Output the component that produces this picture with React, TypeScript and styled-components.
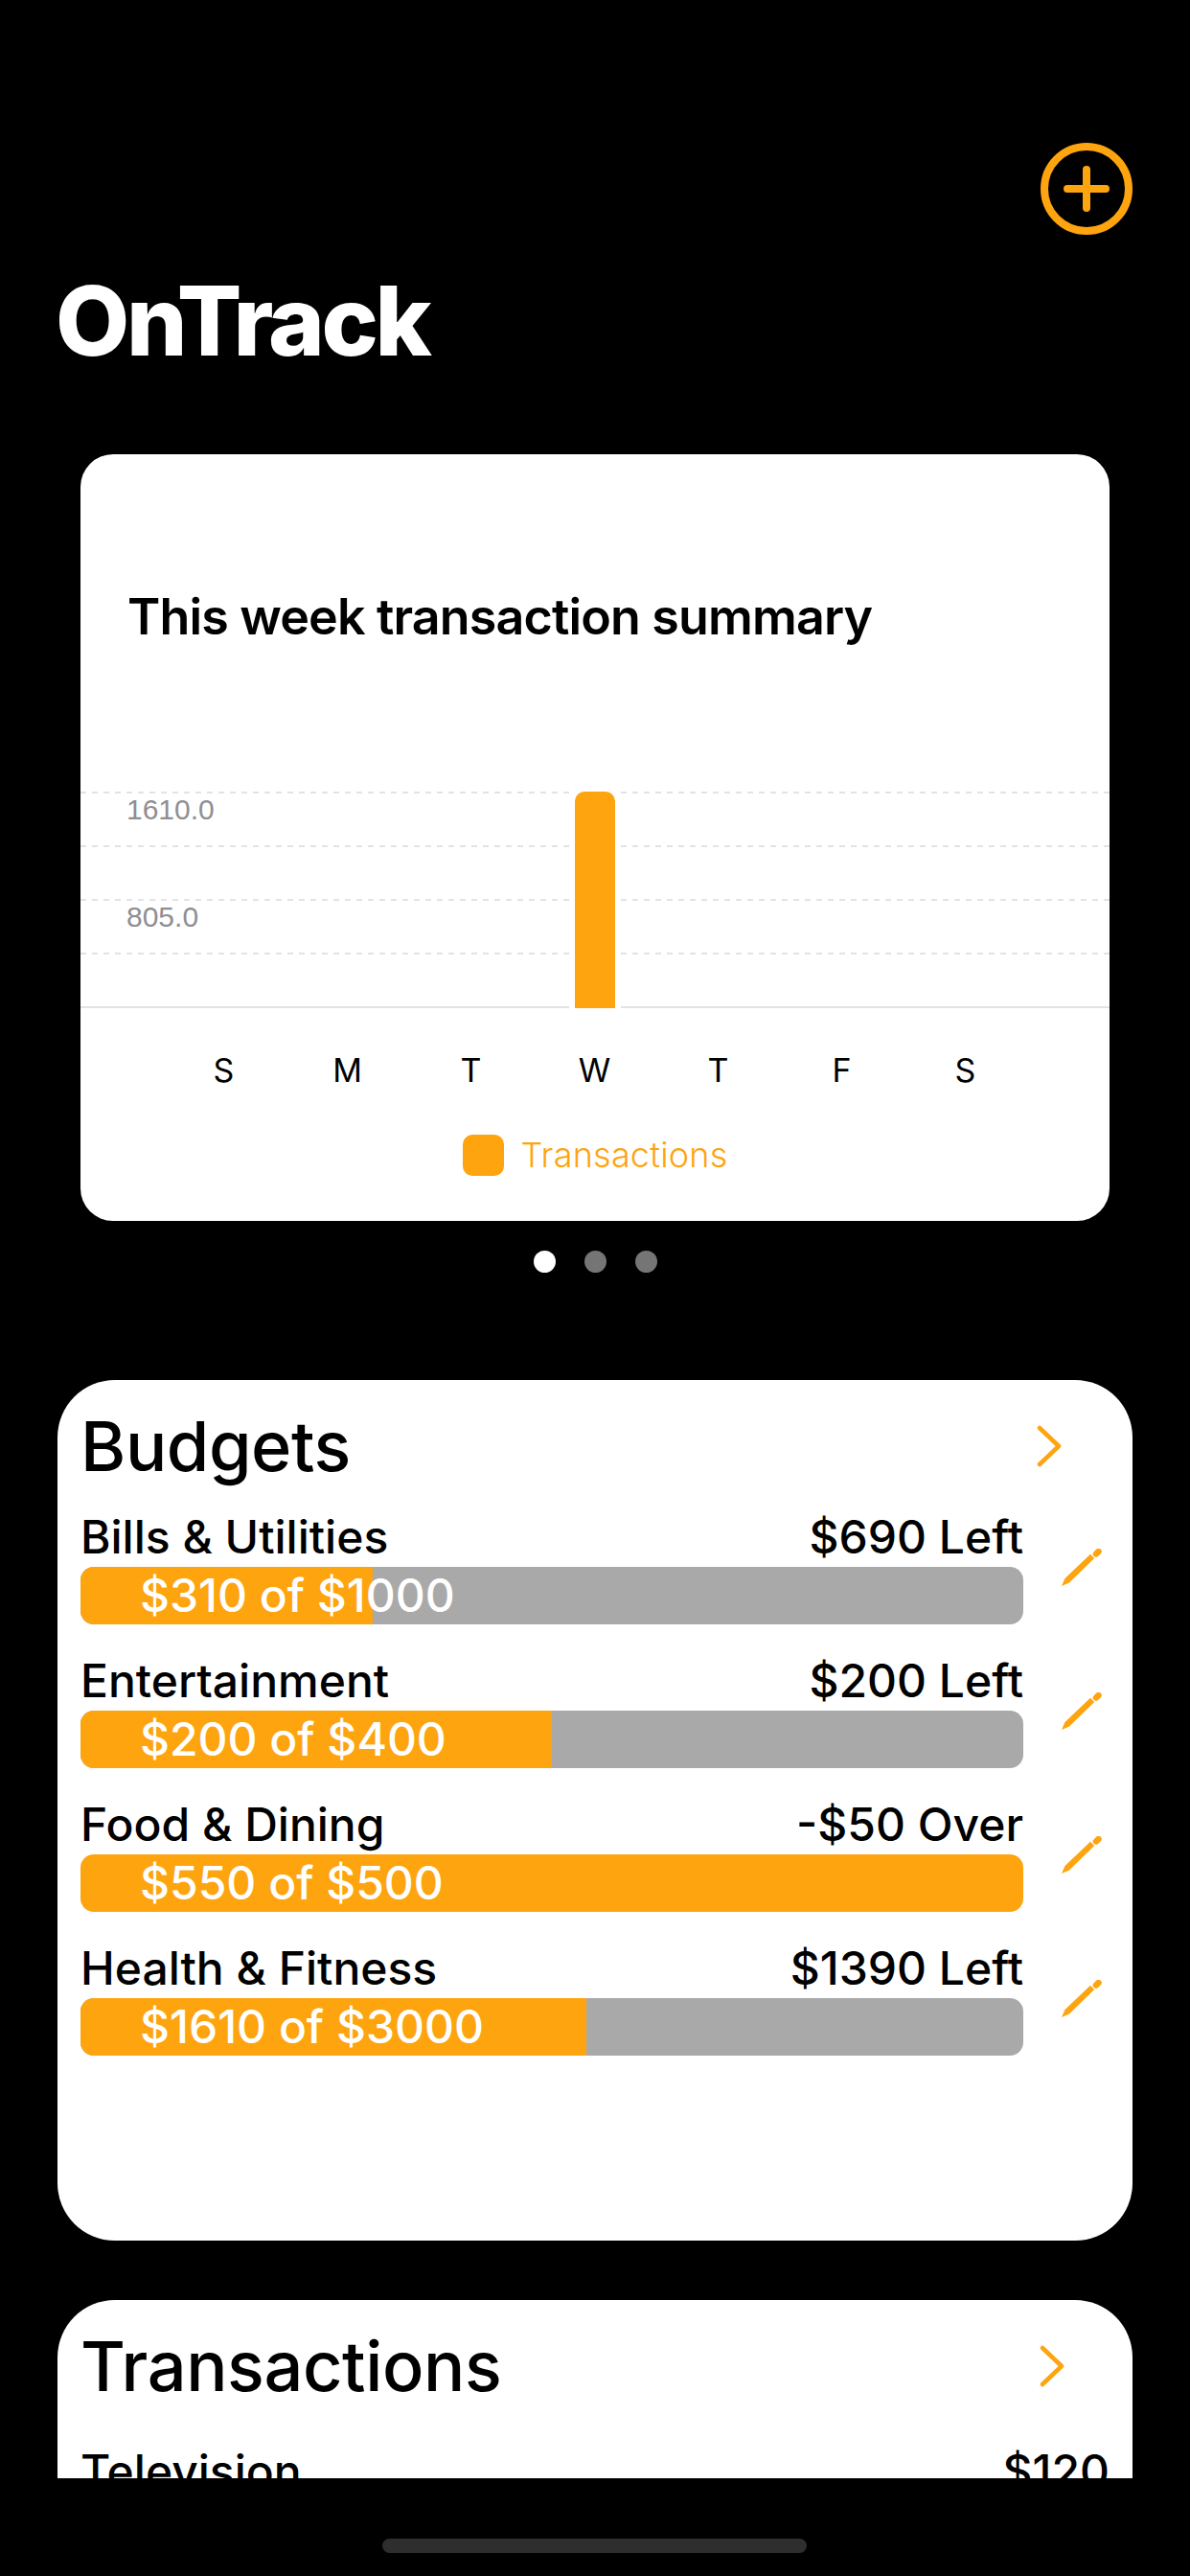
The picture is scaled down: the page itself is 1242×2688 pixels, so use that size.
import React from "react";
import styled, { createGlobalStyle } from "styled-components";

const ORANGE = "#fea40f";

const GlobalStyle = createGlobalStyle`
  html, body {
    margin: 0;
    padding: 0;
    background: #000000;
  }
  * {
    box-sizing: border-box;
  }
`;

const Page = styled.div`
  width: 1242px;
  height: 2688px;
  overflow: hidden;
  padding-top: 149px;
  background: #000000;
  font-family: Inter, "Liberation Sans", sans-serif;
  color: #000000;
`;

const TopBar = styled.div`
  display: flex;
  justify-content: flex-end;
  padding-right: 60px;
`;

const AppTitle = styled.h1`
  margin: 30px 0 79px;
  padding-left: 58px;
  font-size: 100px;
  line-height: 120px;
  font-weight: 800;
  letter-spacing: -3.4px;
  color: #ffffff;
`;

const SummaryCard = styled.section`
  width: 1074px;
  height: 800px;
  margin-left: 84px;
  padding-top: 144px;
  background: #ffffff;
  border-radius: 34px;
`;

const SummaryTitle = styled.h2`
  margin: 0 0 156px;
  padding-left: 49px;
  font-size: 52px;
  line-height: 52px;
  font-weight: 600;
  letter-spacing: -0.85px;
`;

const Plot = styled.div`
  position: relative;
  border-bottom: 2px solid #e3e3e6;
`;

const GridCell = styled.div`
  height: 56px;
  padding: 4px 0 0 48px;
  background: repeating-linear-gradient(to right, #e3e3e6 0 6px, transparent 6px 12px) top left / 100% 2px no-repeat;
`;

const YLabel = styled.span`
  display: block;
  font-family: "Liberation Sans", Arial, sans-serif;
  font-size: 30px;
  line-height: 30px;
  color: #8e8e93;
`;

const Bar = styled.div`
  position: absolute;
  left: 516px;
  top: 0;
  bottom: -2px;
  width: 42px;
  background: ${ORANGE};
  border-radius: 10px 10px 0 0;
  box-shadow: 0 0 0 6px #ffffff;
`;

const XAxis = styled.div`
  display: grid;
  grid-template-columns: repeat(7, 129px);
  margin: 45px 0 46px 85px;
`;

const XLabel = styled.span`
  text-align: center;
  font-size: 34px;
  line-height: 40px;
`;

const Legend = styled.div`
  display: flex;
  justify-content: center;
  align-items: center;
  gap: 18px;
  height: 44px;
`;

const LegendSwatch = styled.span`
  width: 43px;
  height: 43px;
  background: ${ORANGE};
  border-radius: 10px;
`;

const LegendText = styled.span`
  font-size: 36px;
  font-weight: 300;
  letter-spacing: 0.2px;
  color: ${ORANGE};
`;

const Dots = styled.div`
  display: flex;
  justify-content: center;
  gap: 30px;
  margin: 31px 0 112px;
`;

const Dot = styled.span<{ $active?: boolean }>`
  width: 23px;
  height: 23px;
  border-radius: 50%;
  background: ${(p) => (p.$active ? "#ffffff" : "#757575")};
`;

const Panel = styled.section<{ $height: number; $last?: boolean }>`
  width: 1122px;
  height: ${(p) => p.$height}px;
  margin: ${(p) => (p.$last ? "62px" : "0")} 0 0 60px;
  padding-left: 24px;
  overflow: hidden;
  background: #ffffff;
  border-radius: ${(p) => (p.$last ? "60px 60px 0 0" : "60px")};
`;

const PanelHeader = styled.div<{ $chevron: number }>`
  display: flex;
  align-items: center;
  justify-content: space-between;
  height: 138px;
  padding-right: ${(p) => p.$chevron}px;
`;

const PanelTitle = styled.h2`
  margin: 0;
  font-size: 72px;
  line-height: 90px;
  font-weight: 500;
  letter-spacing: -0.4px;
`;

const BudgetRow = styled.div`
  display: flex;
  align-items: center;
  gap: 38px;
  height: 117px;
  margin-bottom: 33px;
`;

const BudgetBody = styled.div`
  width: 984px;
`;

const LabelLine = styled.div`
  display: flex;
  justify-content: space-between;
  height: 57px;
  font-size: 48px;
  line-height: 52px;
  font-weight: 500;
`;

const Track = styled.div`
  position: relative;
  height: 60px;
  overflow: hidden;
  background: #a9a9a9;
  border-radius: 14px;
`;

const Fill = styled.div`
  height: 100%;
  background: ${ORANGE};
`;

const TrackLabel = styled.span`
  position: absolute;
  left: 62px;
  top: 0;
  font-size: 48px;
  line-height: 60px;
  font-weight: 500;
  color: #ffffff;
  white-space: nowrap;
`;

const TransactionLine = styled.div`
  display: flex;
  justify-content: space-between;
  margin-top: 15px;
  padding-right: 24px;
  font-size: 48px;
  line-height: 52px;
  font-weight: 500;
`;

const HomeIndicator = styled.div`
  width: 443px;
  height: 15px;
  margin: 63px 0 0 399px;
  background: #2e2e2e;
  border-radius: 8px;
`;

const PlusIcon = () => (
  <svg width="96" height="96" viewBox="0 0 96 96" fill="none" stroke={ORANGE} strokeLinecap="round">
    <circle cx="48" cy="48" r="44" strokeWidth="8" />
    <path d="M48 28v40M28 48h40" strokeWidth="8" />
  </svg>
);

const Chevron = () => (
  <svg width="26" height="44" viewBox="0 0 26 44" fill="none" stroke={ORANGE} strokeWidth="4.500" strokeLinecap="round" strokeLinejoin="round">
    <path d="M3 3l20 19L3 41" />
  </svg>
);

const Pencil = () => (
  <svg width="44" height="42" viewBox="0 0 44 42" fill={ORANGE}>
    <path d="M2 39l3.500-8L32 5.700l4.200 4.400L10 35.600z" />
    <path d="M38 5.500l2.500-2.500" stroke={ORANGE} strokeWidth="6.500" strokeLinecap="round" />
  </svg>
);

const budgets = [
  { name: "Bills & Utilities", status: "$690 Left", spent: 310, total: 1000 },
  { name: "Entertainment", status: "$200 Left", spent: 200, total: 400 },
  { name: "Food & Dining", status: "-$50 Over", spent: 550, total: 500 },
  { name: "Health & Fitness", status: "$1390 Left", spent: 1610, total: 3000 },
];

const days = ["S", "M", "T", "W", "T", "F", "S"];

const App: React.FC = () => {
  return (
    <>
      <GlobalStyle />
      <Page>
        <TopBar>
          <PlusIcon />
        </TopBar>
        <AppTitle>OnTrack</AppTitle>

        <SummaryCard>
          <SummaryTitle>This week transaction summary</SummaryTitle>
          <Plot>
            <GridCell>
              <YLabel>1610.0</YLabel>
            </GridCell>
            <GridCell />
            <GridCell>
              <YLabel>805.0</YLabel>
            </GridCell>
            <GridCell />
            <Bar />
          </Plot>
          <XAxis>
            {days.map((day, i) => (
              <XLabel key={i}>{day}</XLabel>
            ))}
          </XAxis>
          <Legend>
            <LegendSwatch />
            <LegendText>Transactions</LegendText>
          </Legend>
        </SummaryCard>

        <Dots>
          <Dot $active />
          <Dot />
          <Dot />
        </Dots>

        <Panel $height={898}>
          <PanelHeader $chevron={74}>
            <PanelTitle>Budgets</PanelTitle>
            <Chevron />
          </PanelHeader>
          {budgets.map((b) => (
            <BudgetRow key={b.name}>
              <BudgetBody>
                <LabelLine>
                  <span>{b.name}</span>
                  <span>{b.status}</span>
                </LabelLine>
                <Track>
                  <Fill style={{ width: `${Math.min(b.spent / b.total, 1) * 100}%` }} />
                  <TrackLabel>
                    ${b.spent} of ${b.total}
                  </TrackLabel>
                </Track>
              </BudgetBody>
              <Pencil />
            </BudgetRow>
          ))}
        </Panel>

        <Panel $height={186} $last>
          <PanelHeader $chevron={71}>
            <PanelTitle>Transactions</PanelTitle>
            <Chevron />
          </PanelHeader>
          <TransactionLine>
            <span>Television</span>
            <span>$120</span>
          </TransactionLine>
        </Panel>

        <HomeIndicator />
      </Page>
    </>
  );
};

export default App;
